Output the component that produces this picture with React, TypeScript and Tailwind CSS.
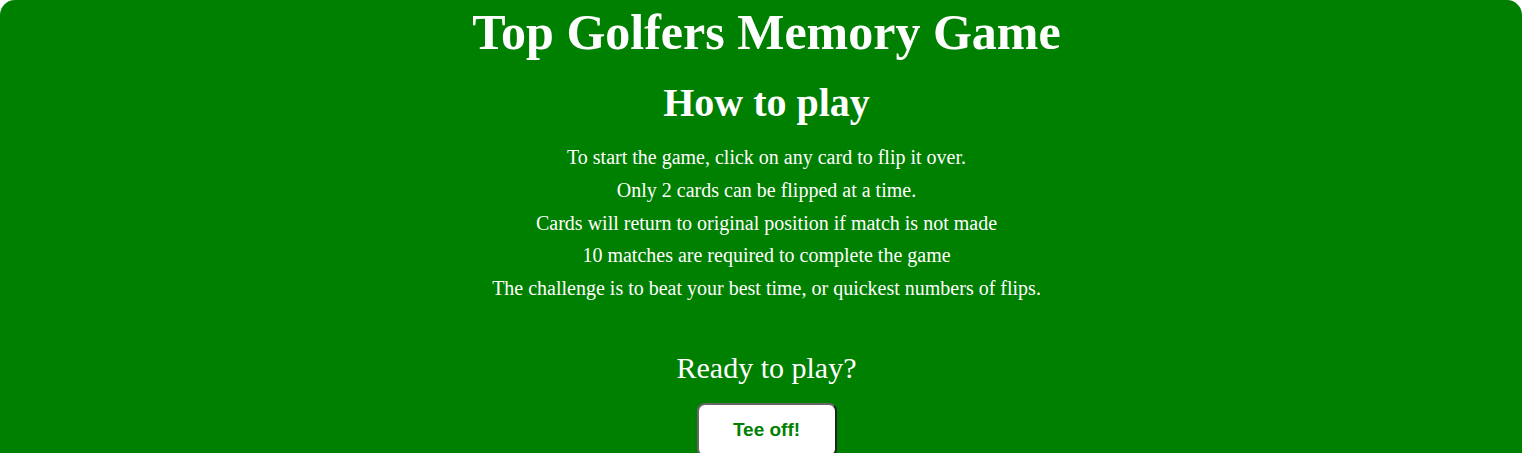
export default function App() {
  const rules = [
    "To start the game, click on any card to flip it over.",
    "Only 2 cards can be flipped at a time.",
    "Cards will return to original position if match is not made",
    "10 matches are required to complete the game",
    "The challenge is to beat your best time, or quickest numbers of flips.",
  ];

  return (
    <div className="w-[1522px] h-[453px] overflow-hidden bg-white">
      <div className="h-[470px] pl-[11px] rounded-[15px] bg-[#008000] text-white text-center font-['Liberation_Serif',serif]">
        {/* Header */}
        <h1 className="pt-[4px] text-[50px] font-bold leading-[56px]">
          Top Golfers Memory Game
        </h1>
        <h2 className="mt-[20px] text-[40px] font-bold leading-[46px]">
          How to play
        </h2>

        {/* Rules */}
        <div className="mt-[20px] text-[20px] leading-[23px]">
          {rules.map((rule) => (
            <p key={rule} className="mb-[9.75px]">
              {rule}
            </p>
          ))}
        </div>

        <p className="mt-[50px] text-[30px] leading-[35px]">Ready to play?</p>

        <button className="mt-[18px] w-[140px] h-[54px] rounded-[8px] border-2 border-t-[#666666] border-l-[#666666] border-r-[#222222] border-b-[#222222] bg-white text-[#008000] text-[19px] font-bold font-['Liberation_Sans',sans-serif]">
          Tee off!
        </button>
      </div>
    </div>
  );
}
